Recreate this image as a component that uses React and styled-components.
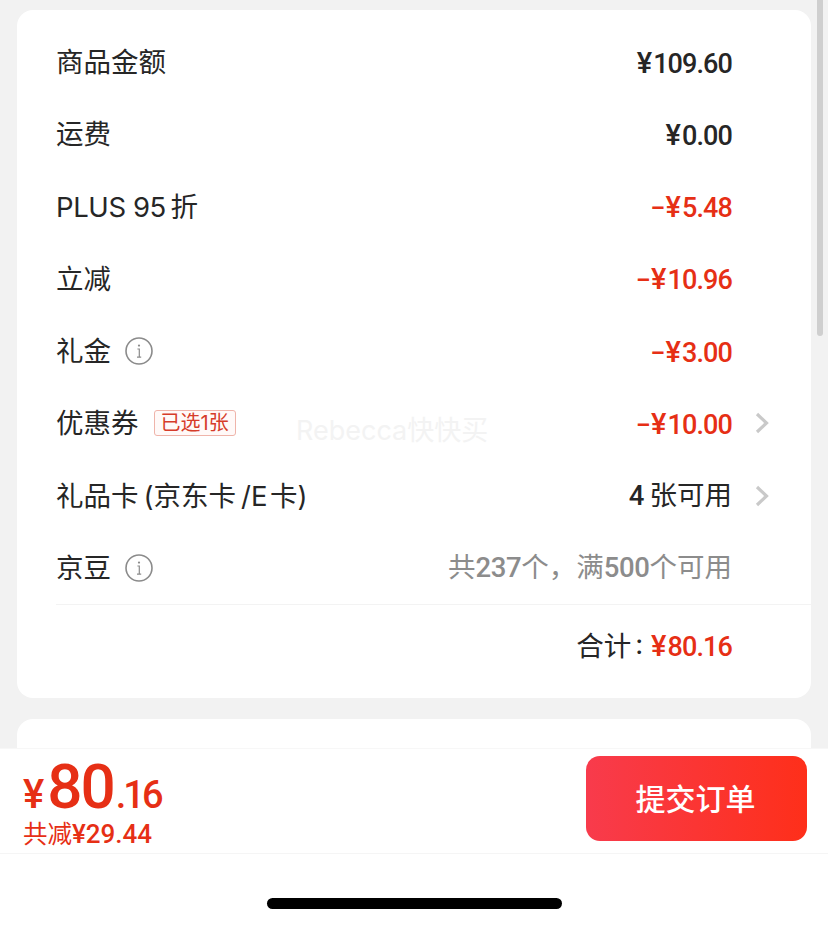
import React from 'react';
import styled, { createGlobalStyle } from 'styled-components';

const CJK = '"Noto Sans CJK SC", sans-serif';
const RED = '#e62f15';

const GlobalStyle = createGlobalStyle`
  html, body {
    margin: 0;
    padding: 0;
    background: #f2f2f2;
  }
`;

const Page = styled.div`
  position: relative;
  width: 828px;
  height: 926px;
  overflow: hidden;
  display: flex;
  flex-direction: column;
  background: #f2f2f2;
  color: #262626;
  font-family: "Inter", ${CJK};
`;

const Scroll = styled.main`
  height: 748px;
  flex: none;
  overflow: hidden;
  box-sizing: border-box;
  padding: 10px 17px 0;
  display: flex;
  flex-direction: column;
  gap: 21px;
`;

const Card = styled.section`
  flex: none;
  background: #fff;
  border-radius: 16px;
  padding-top: ${(p) => (p.$empty ? '0' : '16px')};
  padding-bottom: ${(p) => (p.$empty ? '0' : '12px')};
  height: ${(p) => (p.$empty ? '60px' : 'auto')};
`;

const Row = styled.div`
  height: 72.25px;
  display: flex;
  align-items: center;
  padding-left: 39px;
`;

const Label = styled.span`
  display: flex;
  align-items: center;
  font-size: 27.5px;
  line-height: 36px;
  white-space: nowrap;
  letter-spacing: ${(p) => (p.$tight ? '-0.4px' : '0')};
`;

const Value = styled.span`
  margin-left: ${(p) => (p.$inline ? '0' : 'auto')};
  margin-top: 2px;
  display: flex;
  align-items: baseline;
  font-family: "Roboto", ${CJK};
  font-size: 27px;
  line-height: 36px;
  font-weight: 500;
  letter-spacing: -0.9px;
  white-space: nowrap;
  color: ${(p) => (p.$red ? RED : '#262626')};
`;

const Sign = styled.span`
  margin-right: 1px;
`;

const Yen = styled.span`
  font-size: 29px;
  margin-right: 2px;
`;

const Note = styled.span`
  margin-left: auto;
  font-family: "Roboto", ${CJK};
  font-size: 27.5px;
  line-height: 36px;
  white-space: nowrap;
  color: ${(p) => (p.$muted ? '#8c8c8c' : '#262626')};
  b {
    font-weight: 500;
    letter-spacing: -0.4px;
  }
`;

const Trail = styled.span`
  flex: none;
  width: 79px;
  display: flex;
  align-items: center;
  padding-left: 23px;
  box-sizing: border-box;
`;

const Badge = styled.span`
  margin-left: 15px;
  height: 24px;
  padding: 0 6px;
  display: flex;
  align-items: center;
  border: 1px solid #efb4aa;
  border-radius: 3px;
  background: #fff9f8;
  color: #d63c2a;
  font-size: 20px;
  line-height: 24px;
`;

const InfoWrap = styled.svg`
  margin-left: 14px;
  flex: none;
`;

const TotalRow = styled.div`
  height: 81px;
  margin-left: 39px;
  border-top: 1px solid #f3f3f3;
  display: flex;
  align-items: center;
  justify-content: flex-end;
  padding-right: 79px;
  font-size: 27.5px;
  line-height: 36px;
`;

const Colon = styled.span`
  margin: 0 8px 0 4px;
  position: relative;
  top: -2px;
`;

const Footer = styled.footer`
  flex: none;
  height: 106px;
  box-sizing: border-box;
  background: #fff;
  border-top: 1px solid #f7f7f7;
  border-bottom: 1px solid #f5f5f5;
  padding: 7px 21px 12px 23px;
  display: flex;
  align-items: stretch;
  justify-content: space-between;
`;

const PriceBlock = styled.div`
  display: flex;
  flex-direction: column;
  color: ${RED};
  font-family: "Roboto", ${CJK};
`;

const Price = styled.div`
  display: flex;
  align-items: baseline;
  height: 62px;
  line-height: 62px;
  font-weight: 500;
`;

const PriceYen = styled.span`
  font-size: 40px;
  margin-right: 3px;
`;

const PriceMain = styled.span`
  font-size: 62px;
  letter-spacing: -2px;
`;

const PriceCents = styled.span`
  font-size: 38px;
  letter-spacing: -3px;
  margin-left: 2px;
`;

const Saved = styled.div`
  margin-top: 1px;
  font-size: 24.5px;
  line-height: 30px;
  white-space: nowrap;
  b {
    font-size: 26px;
    font-weight: 500;
  }
`;

const SubmitButton = styled.button`
  width: 221px;
  border: none;
  border-radius: 14px;
  background: linear-gradient(90deg, #f83b4c, #fe2f1a);
  color: #fff;
  font-family: ${CJK};
  font-size: 30px;
  font-weight: 500;
  padding: 0 2px 3px 0;
`;

const HomeArea = styled.div`
  flex: 1;
  background: #fff;
  display: flex;
  justify-content: center;
  padding-top: 44px;
`;

const HomeBar = styled.div`
  width: 295px;
  height: 11px;
  border-radius: 6px;
  background: #000;
`;

const ScrollThumb = styled.div`
  position: absolute;
  top: 0;
  left: 817px;
  width: 6px;
  height: 336px;
  border-radius: 0 0 3px 3px;
  background: #cfcfcf;
`;

const Watermark = styled.div`
  position: absolute;
  left: 296px;
  top: 414px;
  font-family: "Inter", ${CJK};
  font-size: 27px;
  line-height: 34px;
  color: #f3f3f3;
  white-space: nowrap;
  pointer-events: none;
`;

function InfoIcon() {
  return (
    <InfoWrap width="28" height="28" viewBox="0 0 28 28" fill="none">
      <circle cx="14" cy="14" r="13" stroke="#8b8b8b" strokeWidth="1.6" />
      <circle cx="14" cy="8.6" r="1.1" fill="#8b8b8b" />
      <path d="M12.4 12h1.9v8M12 20.2h4.2" stroke="#8b8b8b" strokeWidth="1.2" />
    </InfoWrap>
  );
}

function Chevron() {
  return (
    <svg width="14" height="22" viewBox="0 0 14 22" fill="none">
      <path d="M2 2l9.5 9L2 20" stroke="#c9c9c9" strokeWidth="3.2" />
    </svg>
  );
}

function Money({ sign, amount, red, inline }) {
  return (
    <Value $red={red} $inline={inline}>
      {sign && <Sign>{sign}</Sign>}
      <Yen>¥</Yen>
      {amount}
    </Value>
  );
}

const rows = [
  { label: '商品金额', amount: '109.60' },
  { label: '运费', amount: '0.00' },
  { label: 'PLUS 95\u2009折', tight: true, sign: '\u2212', amount: '5.48', red: true },
  { label: '立减', sign: '\u2212', amount: '10.96', red: true },
  { label: '礼金', info: true, sign: '\u2212', amount: '3.00', red: true },
  { label: '优惠券', badge: '已选1张', sign: '\u2212', amount: '10.00', red: true, more: true },
];

export default function App() {
  return (
    <Page>
      <GlobalStyle />
      <Scroll>
        <Card>
          {rows.map((row) => (
            <Row key={row.label}>
              <Label $tight={row.tight}>{row.label}</Label>
              {row.info && <InfoIcon />}
              {row.badge && <Badge>{row.badge}</Badge>}
              <Money sign={row.sign} amount={row.amount} red={row.red} />
              <Trail>{row.more && <Chevron />}</Trail>
            </Row>
          ))}
          <Row>
            <Label>礼品卡{'\u2009'}(京东卡{'\u2009'}/E{'\u200a'}卡)</Label>
            <Note><b>4</b>{'\u2009'}张可用</Note>
            <Trail><Chevron /></Trail>
          </Row>
          <Row>
            <Label>京豆</Label>
            <InfoIcon />
            <Note $muted>共<b>237</b>个，满<b>500</b>个可用</Note>
            <Trail />
          </Row>
          <TotalRow>
            合计<Colon>:</Colon><Money amount="80.16" red inline />
          </TotalRow>
        </Card>
        <Card $empty />
      </Scroll>
      <Footer>
        <PriceBlock>
          <Price>
            <PriceYen>¥</PriceYen>
            <PriceMain>80</PriceMain>
            <PriceCents>.16</PriceCents>
          </Price>
          <Saved>共减<b>¥29.44</b></Saved>
        </PriceBlock>
        <SubmitButton type="button">提交订单</SubmitButton>
      </Footer>
      <HomeArea>
        <HomeBar />
      </HomeArea>
      <ScrollThumb />
      <Watermark>Rebecca快快买</Watermark>
    </Page>
  );
}
